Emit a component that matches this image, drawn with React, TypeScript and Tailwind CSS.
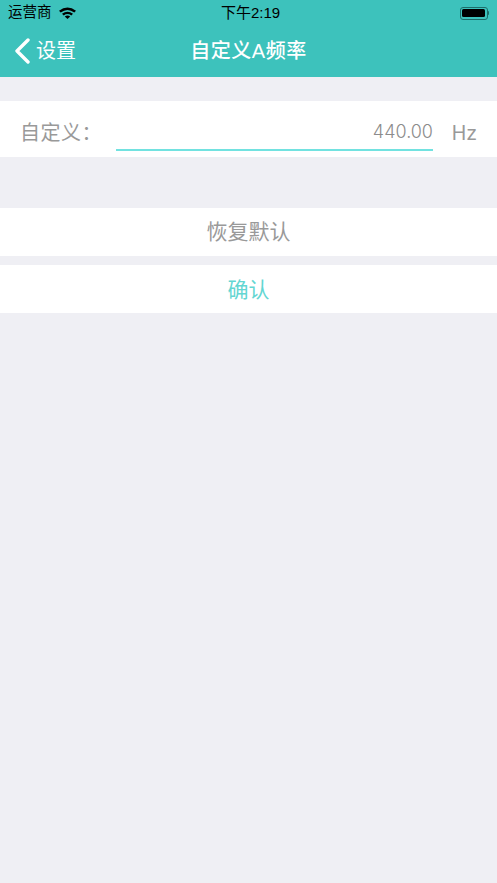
const font = { fontFamily: '"Liberation Sans", "Noto Sans CJK SC", sans-serif' }

function WifiIcon() {
    return (
        <svg width="17" height="12" viewBox="0 0 17 12" className="block">
            <path d="M0 3.7 Q8.5 -2.6 17 3.7 L15.3 5.6 Q8.5 0.6 1.7 5.6 Z" fill="#000" />
            <path d="M3 6.7 Q8.5 2.6 14 6.7 L12.3 8.5 Q8.5 5.7 4.7 8.5 Z" fill="#000" />
            <path d="M5.8 9.5 Q8.5 7.6 11.2 9.5 L8.5 12 Z" fill="#000" />
        </svg>
    )
}

function BatteryIcon() {
    return (
        <div className="flex items-center">
            <div className="w-[28px] h-[13px] rounded-[3px] border border-[#1c6e6a] p-[1.5px]">
                <div className="w-full h-full bg-black rounded-[1.5px]" />
            </div>
            <div className="w-[1.5px] h-[4px] bg-[#1c6e6a] rounded-r-sm" />
        </div>
    )
}

function BackChevron() {
    return (
        <svg width="16" height="26" viewBox="0 0 16 26" className="block">
            <path d="M14 2 L3 13 L14 24" fill="none" stroke="#fff" strokeWidth="3.4" strokeLinecap="round" strokeLinejoin="round" />
        </svg>
    )
}

export default function App() {
    return (
        <div className="w-[497px] h-[883px] bg-[#efeff4] flex flex-col overflow-hidden" style={font}>
            {/* Header */}
            <div className="h-[77px] bg-[#3dc2bc] flex-shrink-0 flex flex-col">
                <div className="h-[26px] relative flex items-center justify-between pl-[8px] pr-[8px] text-black text-[14.5px]">
                    <div className="flex items-center gap-[7px]">
                        <span>运营商</span>
                        <WifiIcon />
                    </div>
                    <span className="absolute left-[221px] top-[4px] leading-[18px] text-[15px]">下午2:19</span>
                    <BatteryIcon />
                </div>
                <div className="relative flex-1 flex items-center justify-center pb-[1px]">
                    <div className="absolute left-[14px] top-[10px] flex items-center gap-[6px] text-white text-[20px]">
                        <BackChevron />
                        <span>设置</span>
                    </div>
                    <span className="text-white text-[20px] font-medium tracking-[0.5px]">自定义A频率</span>
                </div>
            </div>

            {/* Input row */}
            <div className="mt-[24px] h-[56px] bg-white flex pl-[20px] pr-[20px] text-[#999] text-[19px]">
                <span className="w-[96px] flex items-center text-[20px] tracking-[0.5px] pt-[7px]">自定义：</span>
                <div className="w-[317px] h-[50px] border-b-2 border-[#72e2e0] flex items-center justify-end pt-[12px]">
                    <span style={{ fontFamily: 'Inter, sans-serif' }} className="font-light text-[18px] text-[#8c8c8c]">440.00</span>
                </div>
                <span className="ml-auto flex items-center pt-[9px] text-[19.5px]" style={{ fontFamily: 'Inter, sans-serif' }}>Hz</span>
            </div>

            <button className="mt-[51px] h-[48px] bg-white text-[#999] text-[21px] flex items-center justify-center">恢复默认</button>
            <button className="mt-[9px] h-[48px] bg-white text-[#63d6d2] text-[21px] flex items-center justify-center pt-[2px]">确认</button>
        </div>
    )
}
